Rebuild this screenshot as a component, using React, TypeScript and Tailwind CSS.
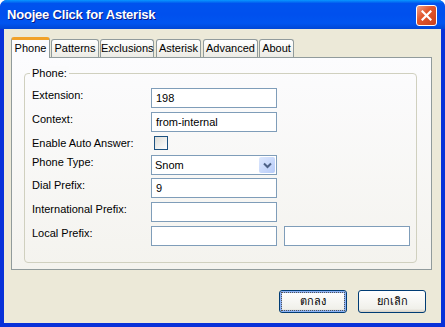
import React from "react";

/* XP-style "Noojee Click for Asterisk" preferences dialog */

const TABS = ["Phone", "Patterns", "Exclusions", "Asterisk", "Advanced", "About"];
const TAB_WIDTHS = [39, 48, 54, 45, 55, 35];
const TAB_GAPS = [0, 1, 1, 2, 2, 1];

const FONT = { fontFamily: '"Liberation Sans", Arial, sans-serif' };

function TextBox({ value = "" }: { value?: string }) {
  return (
    <div className="h-[20px] w-[126px] border border-[#7f9db9] bg-white px-[4px] text-[11px] leading-[18px] text-black">
      {value}
    </div>
  );
}

function Row({ label, children, className = "" }: { label: string; children: React.ReactNode; className?: string }) {
  return (
    <div className={`flex items-start ${className}`}>
      <div className="w-[119px] text-[11px] leading-[14px] text-black">{label}</div>
      {children}
    </div>
  );
}

export default function App() {
  return (
    <div className="h-[327px] w-[445px] overflow-hidden rounded-t-[7px] bg-[#0831d9] select-none" style={FONT}>
      {/* title bar */}
      <div className="relative flex h-[29px] items-center bg-[linear-gradient(to_bottom,#0997ff_0%,#0053ee_12%,#0050ee_50%,#0055f0_80%,#0046d5_100%)] pl-[7px]">
        <span className="text-[13px] font-bold tracking-[-0.2px] text-white [text-shadow:1px_1px_0_#0a1883]">
          Noojee Click for Asterisk
        </span>
        <div className="absolute right-[8px] top-[5px] flex h-[21px] w-[21px] items-center justify-center rounded-[3px] border border-white bg-[linear-gradient(135deg,#f0a088_0%,#e2582e_40%,#c8401c_100%)]">
          <svg width="11" height="11" viewBox="0 0 11 11">
            <path d="M1.5 1.5 L9.5 9.5 M9.5 1.5 L1.5 9.5" stroke="white" strokeWidth="2.2" strokeLinecap="square" />
          </svg>
        </div>
      </div>

      {/* client area */}
      <div className="mx-[4px] h-[294px] bg-[#ece9d8] pl-[7px] pr-[9px] pt-[8px]">
        {/* tab strip */}
        <div className="flex h-[20px] items-end">
          {TABS.map((t, i) =>
            i === 0 ? (
              <div
                key={t}
                style={{ width: TAB_WIDTHS[i] }}
                className="relative z-10 -mb-[1px] h-[21px] rounded-t-[3px] border-x border-[#919b9c] border-t-[3px] border-t-[#f1a129] bg-[#fcfcfe] text-center text-[11px] leading-[16px] text-black"
              >
                {t}
              </div>
            ) : (
              <div
                key={t}
                style={{ width: TAB_WIDTHS[i], marginLeft: TAB_GAPS[i] }}
                className="h-[18px] whitespace-nowrap rounded-t-[3px] border border-b-0 border-[#919b9c] bg-[linear-gradient(to_bottom,#ffffff,#ecebe5)] text-center text-[11px] leading-[17px] text-black"
              >
                {t}
              </div>
            )
          )}
        </div>

        {/* tab page */}
        <div className="h-[213px] w-[421px] border border-[#919b9c] bg-[linear-gradient(to_bottom,#fcfcfe,#f4f3ee)] pl-[12px] pr-[14px] pt-[15px]">
          <div className="relative h-[190px] rounded-[4px] border border-[#d0d0bf] pl-[7px] pt-[14px]">
            <span className="absolute -top-[8px] left-[5px] bg-[#fbfbfc] px-[2px] text-[11px] leading-[14px] text-black">
              Phone:
            </span>
            <Row label="Extension:">
              <TextBox value="198" />
            </Row>
            <Row label="Context:" className="mt-[4px]">
              <TextBox value="from-internal" />
            </Row>
            <Row label="Enable Auto Answer:" className="mt-[4px]">
              <div className="ml-[3px] h-[14px] w-[14px] border border-[#1c5180] bg-[linear-gradient(135deg,#dcdcd7,#ffffff)]" />
            </Row>
            <Row label="Phone Type:" className="mt-[5px]">
              <div className="flex h-[20px] w-[126px] items-center border border-[#7f9db9] bg-white pl-[3px] pr-[1px] text-[11px] text-black">
                <span className="flex-1">Snom</span>
                <div className="flex h-[16px] w-[16px] items-center justify-center rounded-[2px] bg-[linear-gradient(135deg,#dde8fd,#b7cbf8)]">
                  <svg width="9" height="7" viewBox="0 0 9 7">
                    <path d="M1 1.5 L4.5 5 L8 1.5" fill="none" stroke="#4d6185" strokeWidth="2" />
                  </svg>
                </div>
              </div>
            </Row>
            <Row label="Dial Prefix:" className="mt-[3px]">
              <TextBox value="9" />
            </Row>
            <Row label="International Prefix:" className="mt-[4px]">
              <TextBox />
            </Row>
            <Row label="Local Prefix:" className="mt-[4px]">
              <TextBox />
              <div className="ml-[7px]">
                <TextBox />
              </div>
            </Row>
          </div>
        </div>

        {/* buttons */}
        <div className="mt-[20px] flex justify-end gap-[11px] pr-[6px]">
          <button className="flex h-[23px] w-[68px] items-center justify-center rounded-[3px] border border-[#003c74] bg-[linear-gradient(to_bottom,#ffffff,#f0f0ea_85%,#d6d0c5)] p-[1px] shadow-[inset_0_0_0_2px_#8db2f4] text-[11px] text-black">
            <span className="flex h-full w-full items-center justify-center border border-dotted border-[#555]">ตกลง</span>
          </button>
          <button className="flex h-[23px] w-[68px] items-center justify-center rounded-[3px] border border-[#003c74] bg-[linear-gradient(to_bottom,#ffffff,#f0f0ea_85%,#d6d0c5)] text-[11px] text-black">
            ยกเลิก
          </button>
        </div>
      </div>
    </div>
  );
}
